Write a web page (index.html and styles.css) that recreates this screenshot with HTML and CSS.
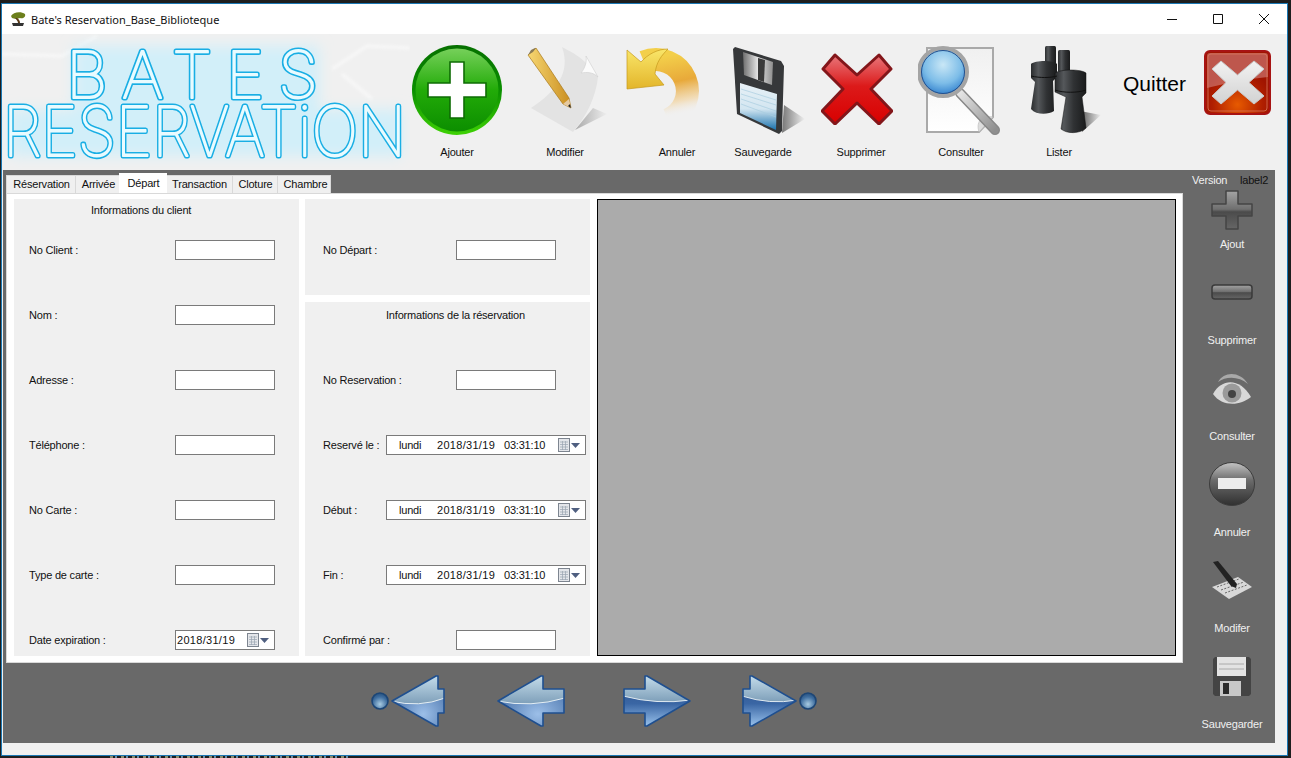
FILE: index.html
```html
<!DOCTYPE html>
<html lang="fr">
<head>
<meta charset="utf-8">
<title>Bate's Reservation_Base_Biblioteque</title>
<link rel="stylesheet" href="styles.css">
</head>
<body>
<svg class="defs" width="0" height="0" aria-hidden="true">
  <defs>
    <linearGradient id="upperBlue" x1="0" y1="0" x2="0" y2="1">
      <stop offset="0" stop-color="#c6deec"/><stop offset="1" stop-color="#7e9fb9"/>
    </linearGradient>
    <radialGradient id="lowerLight" cx=".6" cy=".75" r=".6">
      <stop offset="0" stop-color="#9cbfe8"/><stop offset="1" stop-color="#4d76ad"/>
    </radialGradient>
    <linearGradient id="lowerDark" x1="0" y1="0" x2="0" y2="1">
      <stop offset="0" stop-color="#2a5088"/><stop offset=".55" stop-color="#3a66a4"/><stop offset="1" stop-color="#9cc5ee"/>
    </linearGradient>
    <radialGradient id="dotFill" cx=".5" cy=".7" r=".65">
      <stop offset="0" stop-color="#a8cbe2"/><stop offset=".7" stop-color="#3f6e9f"/><stop offset="1" stop-color="#2a5686"/>
    </radialGradient>
    <linearGradient id="metal" x1="0" y1="0" x2="0" y2="1">
      <stop offset="0" stop-color="#a4a4a4"/><stop offset=".48" stop-color="#6f6f6f"/><stop offset=".55" stop-color="#4b4b4b"/><stop offset="1" stop-color="#666"/>
    </linearGradient>
    <linearGradient id="binoc" x1="0" y1="0" x2="1" y2="0">
      <stop offset="0" stop-color="#2a2c2e"/><stop offset=".28" stop-color="#55585b"/><stop offset=".6" stop-color="#303234"/><stop offset="1" stop-color="#1a1b1c"/>
    </linearGradient>
    <clipPath id="clipA1"><path d="M1 26 45 1h2v13h6v24h-6v13h-2z"/></clipPath>
    <clipPath id="clipA2"><path d="M1 26 44 1h2v13h21v24H46v13h-2z"/></clipPath>
    <clipPath id="clipA3"><path d="M67 26 24 1h-2v13H1v24h21v13h2z"/></clipPath>
    <clipPath id="clipA4"><path d="M54 26 10 1H8v13H1v24h7v13h2z"/></clipPath>
    <g id="dot">
      <circle cx="9" cy="9" r="8" fill="url(#dotFill)" stroke="#1d4676" stroke-width="1.600"/>
    </g>
  </defs>
</svg>

<div class="window">
  <header class="titlebar">
    <svg class="app-icon" viewBox="0 0 16 16" width="16" height="16">
      <path d="M1 5C3 1 11 0 15 3 16 6 13 8 10 7 8 8 4 8 2 7z" fill="#6c7f1c"/>
      <path d="M5 7c1 1 3 3 3 5h2c0-2-1-4-3-5z" fill="#5b3a17"/>
      <path d="M2 12h12l-1 3H3z" fill="#333"/>
    </svg>
    <span class="title-text">Bate's Reservation_Base_Biblioteque</span>
    <div class="caption">
      <svg class="cap-btn" viewBox="0 0 46 30" width="46" height="30"><path d="M18 15.500h10" stroke="#111" fill="none"/></svg>
      <svg class="cap-btn" viewBox="0 0 46 30" width="46" height="30"><path d="M18.500 10.500h9v9h-9z" stroke="#111" fill="none"/></svg>
      <svg class="cap-btn" viewBox="0 0 46 30" width="46" height="30"><path d="M18 10l10 10M28 10 18 20" stroke="#111" fill="none"/></svg>
    </div>
  </header>

  <section class="toolbar">
    <div class="logo">
      <svg viewBox="0 0 408 136" width="408" height="136">
        <defs>
          <filter id="glow" x="-10%" y="-20%" width="120%" height="140%"><feGaussianBlur stdDeviation="7"/></filter>
          <filter id="faint" x="-10%" y="-10%" width="120%" height="120%"><feGaussianBlur stdDeviation="1.500"/></filter>
          <text id="t1" x="64" y="64" font-size="65" textLength="252" lengthAdjust="spacing" class="neon-font">BATES</text>
          <text id="t2" x="1" y="122" font-size="69" textLength="403" lengthAdjust="spacingAndGlyphs" class="neon-font">RESERVATiON</text>
        </defs>
        <g filter="url(#faint)" fill="none" stroke="#f8f8f8" stroke-width="3">
          <path d="M0 20 60 22 95 2M330 35 365 12 408 14M340 40l30 25"/>
        </g>
        <g filter="url(#glow)" fill="#d2eff9">
          <rect x="72" y="12" width="245" height="66"/>
          <rect x="8" y="76" width="392" height="46"/>
        </g>
        <use href="#t1" class="tube-out"/><use href="#t2" class="tube-out"/>
        <use href="#t1" class="tube-in"/><use href="#t2" class="tube-in"/>
      </svg>
    </div>

    <div class="tool tool-add">
      <svg class="ic-add" viewBox="0 0 90 90" width="90" height="90">
        <defs>
          <linearGradient id="addRim" x1="0" y1="0" x2="0" y2="1"><stop offset="0" stop-color="#067000"/><stop offset=".5" stop-color="#0a8f00"/><stop offset="1" stop-color="#3fd205"/></linearGradient>
          <linearGradient id="addIn" x1="0" y1="0" x2="0" y2="1"><stop offset="0" stop-color="#76d05a"/><stop offset=".5" stop-color="#22ab08"/><stop offset="1" stop-color="#0c8e00"/></linearGradient>
        </defs>
        <circle cx="45" cy="45" r="45" fill="url(#addRim)"/>
        <circle cx="45" cy="45" r="41.500" fill="url(#addIn)"/>
        <path d="M38 17h14v21h22v14H52v21H38V52H16V38h22z" fill="#fff" stroke="#0e6c04" stroke-width="1.600"/>
      </svg>
      <span class="tool-label">Ajouter</span>
    </div>

    <div class="tool tool-mod">
      <svg class="ic-mod" viewBox="0 0 84 90" width="84" height="90">
        <defs>
          <linearGradient id="pencil" x1="0" y1="0" x2="1" y2="0"><stop offset="0" stop-color="#f7d772"/><stop offset="1" stop-color="#c98d1f"/></linearGradient>
          <linearGradient id="paperSh" x1="0" y1="0" x2="1" y2="0"><stop offset="0" stop-color="#a9a9a9"/><stop offset="1" stop-color="#eee"/></linearGradient>
        </defs>
        <path d="M48 84 80 68 66 62z" fill="url(#paperSh)"/>
        <path d="M35 1C44 26 30 45 4 62L46 86C60 70 69 50 71 31L61 19C55 12 45 6 35 1z" fill="#e3e3e3"/>
        <path d="M59 10 71 31C66 26 60 26 54 27 58 22 60 16 59 10z" fill="#fbfbfb" stroke="#cfcfcf" stroke-width=".6"/>
        <path d="M1 9 9 2 42 52 44 62 36 58z" fill="url(#pencil)" stroke="#a9791a" stroke-width=".7"/>
        <path d="M1 9 4 4 8 2 9 2 6 6z" fill="#8a7a55"/>
        <path d="M36 58 42 53 44 62z" fill="#e6caa1"/>
        <path d="M41 60 43 58 44 62z" fill="#222"/>
      </svg>
      <span class="tool-label">Modifier</span>
    </div>

    <div class="tool tool-undo">
      <svg class="ic-undo" viewBox="0 0 84 84" width="84" height="84">
        <defs>
          <linearGradient id="undoArc" x1=".1" y1="0" x2=".25" y2="1"><stop offset="0" stop-color="#f3cf4a"/><stop offset=".45" stop-color="#e8a93a"/><stop offset=".78" stop-color="#f2d9ae" stop-opacity=".8"/><stop offset="1" stop-color="#f0f0f0" stop-opacity="0"/></linearGradient>
          <linearGradient id="undoHead" x1="0" y1="0" x2="0" y2="1"><stop offset="0" stop-color="#f9e66a"/><stop offset="1" stop-color="#e3b52a"/></linearGradient>
        </defs>
        <path d="M18 16A30 30 0 1 1 42 74" fill="none" stroke="url(#undoArc)" stroke-width="23"/>
        <path d="M1 4 15 16C22 8 32 3 42 3 36 9 30 16 29 28L38 39 1 43z" fill="url(#undoHead)" stroke="#c69a1d" stroke-width=".7"/>
      </svg>
      <span class="tool-label">Annuler</span>
    </div>

    <div class="tool tool-save">
      <svg class="ic-save" viewBox="0 0 74 90" width="74" height="90">
        <defs>
          <linearGradient id="shutter" x1="0" y1="0" x2="1" y2="0"><stop offset="0" stop-color="#6f6f6f"/><stop offset=".5" stop-color="#e6e6e6"/><stop offset="1" stop-color="#8e8e8e"/></linearGradient>
          <linearGradient id="flopSh" x1="0" y1="0" x2="1" y2="0"><stop offset="0" stop-color="#777"/><stop offset="1" stop-color="#f0f0f0"/></linearGradient>
          <linearGradient id="flopBlue" x1="0" y1="0" x2="0" y2="1"><stop offset="0" stop-color="#e8f1f6"/><stop offset=".55" stop-color="#d3e6f1"/><stop offset="1" stop-color="#1a72ad"/></linearGradient>
        </defs>
        <path d="M50 86 73 72 52 58z" fill="url(#flopSh)"/>
        <path d="M1 2 3 0 49 14 52 19 50 84 47 87 5 67z" fill="#36383a"/>
        <path d="M11 5 41 15 40 38 12 28z" fill="url(#shutter)"/>
        <path d="M26 11 33 13 32 35 26 33z" fill="#3a3a3a"/>
        <path d="M8 36 45 47 44 83 8 66z" fill="url(#flopBlue)"/>
        <path d="M9 42 44 53M9 47 44 58M9 52 44 64M9 57 44 70" stroke="#a9cde0" stroke-width=".7" fill="none"/>
      </svg>
      <span class="tool-label">Sauvegarde</span>
    </div>

    <div class="tool tool-del">
      <svg class="ic-del" viewBox="0 0 72 72" width="72" height="72">
        <defs>
          <linearGradient id="xFill" x1="0" y1="0" x2="0" y2="1"><stop offset="0" stop-color="#e8777b"/><stop offset=".45" stop-color="#dc1a1a"/><stop offset="1" stop-color="#d80000"/></linearGradient>
        </defs>
        <path d="M14 2 36 22 58 2 70 16 50 36 71 58 58 71 36 50 14 71 1 58 22 36 2 16z" fill="url(#xFill)" stroke="#83161a" stroke-width="3" stroke-linejoin="round"/>
      </svg>
      <span class="tool-label">Supprimer</span>
    </div>

    <div class="tool tool-cons">
      <svg class="ic-cons" viewBox="0 0 84 90" width="84" height="90">
        <defs>
          <linearGradient id="docF" x1="0" y1="0" x2="0" y2="1"><stop offset="0" stop-color="#f0f0f0"/><stop offset="1" stop-color="#fff"/></linearGradient>
          <radialGradient id="lens" cx=".5" cy=".35" r=".7"><stop offset="0" stop-color="#c9e7f6"/><stop offset=".55" stop-color="#7dbde8"/><stop offset="1" stop-color="#1d70c6"/></radialGradient>
          <linearGradient id="handle" x1="0" y1="0" x2="1" y2="1"><stop offset="0" stop-color="#e4e4e4"/><stop offset="1" stop-color="#8f8f8f"/></linearGradient>
        </defs>
        <path d="M9 3H75V72L61 87H9z" fill="url(#docF)" stroke="#a9a9a9" stroke-width="2"/>
        <path d="M61 87C58 78 62 70 75 72z" fill="#ddd" stroke="#b5b5b5" stroke-width=".6"/>
        <path d="M42 48 77 85" stroke="#888" stroke-width="10" stroke-linecap="round"/>
        <path d="M42 48 77 85" stroke="url(#handle)" stroke-width="7" stroke-linecap="round"/>
        <circle cx="25" cy="27" r="24" fill="url(#lens)" stroke="#a4a4a4" stroke-width="4"/>
        <circle cx="25" cy="27" r="21.500" fill="none" stroke="#244f8b" stroke-width="1"/>
      </svg>
      <span class="tool-label">Consulter</span>
    </div>

    <div class="tool tool-list">
      <svg class="ic-list" viewBox="0 0 72 90" width="72" height="90">
        <defs>
          <linearGradient id="binSh" x1="0" y1="0" x2="1" y2="0"><stop offset="0" stop-color="#555"/><stop offset="1" stop-color="#eee"/></linearGradient>
        </defs>
        <path d="M52 87 71 70 50 66z" fill="url(#binSh)"/>
        <rect x="15" y="1" width="11" height="18" rx="1.500" fill="url(#binoc)"/>
        <rect x="28" y="5" width="12" height="22" rx="1.500" fill="url(#binoc)"/>
        <path d="M1 19C5 15 24 15 27 19V32L23 36 24 66C18 70 6 70 1 64L5 37 1 33z" fill="url(#binoc)"/>
        <path d="M25 28C30 24 52 24 56 28V48L52 52 56 83C50 89 37 89 31 84L36 52 25 47z" fill="url(#binoc)" stroke="#111" stroke-width=".5"/>
        <path d="M25 45C33 48 48 48 56 45M1 31C10 33 20 33 27 31" stroke="#111" fill="none"/>
      </svg>
      <span class="tool-label">Lister</span>
    </div>

    <div class="quit">
      <span class="quit-label">Quitter</span>
      <svg class="ic-quit" viewBox="0 0 67 65" width="67" height="65">
        <defs>
          <radialGradient id="quitF" cx=".5" cy=".85" r=".55"><stop offset="0" stop-color="#e75a00"/><stop offset=".7" stop-color="#b01f00"/><stop offset="1" stop-color="#a01400"/></radialGradient>
          <linearGradient id="xGrey" x1="0" y1="0" x2="0" y2="1"><stop offset="0" stop-color="#f2f2f2"/><stop offset="1" stop-color="#d2d2d2"/></linearGradient>
        </defs>
        <rect x="1" y="1" width="65" height="63" rx="5" fill="url(#quitF)" stroke="#a71313" stroke-width="2"/>
        <path d="M3 6Q3 3 6 3H61Q64 3 64 6V27Q34 30 3 38z" fill="#dc9a9a" fill-opacity=".5"/>
        <rect x="4" y="4" width="59" height="57" rx="3" fill="none" stroke="#d8765a" stroke-width=".8"/>
        <path d="M17 11 33.500 25 50 11 60 19 45 32.500 60 46 50 54 33.500 40 17 54 8 46 22 32.500 8 19z" fill="url(#xGrey)" stroke="#c8c8c8" stroke-width="1" stroke-linejoin="round"/>
      </svg>
    </div>
  </section>

  <section class="workspace">
    <div class="content">
      <nav class="tabs">
        <span class="tab tab-w1">Réservation</span>
        <span class="tab tab-w2">Arrivée</span>
        <span class="tab tab-active">Départ</span>
        <span class="tab tab-w4">Transaction</span>
        <span class="tab tab-w5">Cloture</span>
        <span class="tab tab-w6">Chambre</span>
      </nav>
      <div class="page">
        <div class="panel panel-client">
          <h2 class="panel-title title-client">Informations du client</h2>
          <div class="fields">
            <label class="field"><span class="lbl lbl-client">No Client :</span><input class="box" type="text"></label>
            <label class="field"><span class="lbl lbl-client">Nom :</span><input class="box" type="text"></label>
            <label class="field"><span class="lbl lbl-client">Adresse :</span><input class="box" type="text"></label>
            <label class="field"><span class="lbl lbl-client">Téléphone :</span><input class="box" type="text"></label>
            <label class="field"><span class="lbl lbl-client">No Carte :</span><input class="box" type="text"></label>
            <label class="field"><span class="lbl lbl-client">Type de carte :</span><input class="box" type="text"></label>
            <div class="field"><span class="lbl lbl-client">Date expiration :</span>
              <div class="box date-short"><span class="stamp-short">2018/31/19</span>
                <svg class="cal" viewBox="0 0 23 14" width="23" height="14"><rect x=".5" y=".5" width="11" height="13" fill="#e4e6ea" stroke="#7d8590"/><path d="M2 4h8M2 6.500h8M2 9h8M2 11.500h8M4.500 3v9M7.500 3v9" stroke="#9aa3b0" stroke-width=".7"/><path d="M13 5h9l-4.500 5z" fill="#4f5f80"/></svg>
              </div>
            </div>
          </div>
        </div>
        <div class="mid">
          <div class="panel panel-depart">
            <div class="field"><span class="lbl lbl-mid">No Départ :</span><input class="box" type="text"></div>
          </div>
          <div class="panel panel-resa">
            <h2 class="panel-title title-resa">Informations de la réservation</h2>
            <div class="fields">
              <div class="field"><span class="lbl lbl-mid">No Reservation :</span><input class="box" type="text"></div>
              <div class="field"><span class="lbl lbl-date">Reservé le :</span>
                <div class="box date-long"><span class="day">lundi</span><span class="stamp">2018/31/19</span><span class="clock">03:31:10</span>
                  <svg class="cal" viewBox="0 0 23 14" width="23" height="14"><rect x=".5" y=".5" width="11" height="13" fill="#e4e6ea" stroke="#7d8590"/><path d="M2 4h8M2 6.500h8M2 9h8M2 11.500h8M4.500 3v9M7.500 3v9" stroke="#9aa3b0" stroke-width=".7"/><path d="M13 5h9l-4.500 5z" fill="#4f5f80"/></svg>
                </div>
              </div>
              <div class="field"><span class="lbl lbl-date">Début :</span>
                <div class="box date-long"><span class="day">lundi</span><span class="stamp">2018/31/19</span><span class="clock">03:31:10</span>
                  <svg class="cal" viewBox="0 0 23 14" width="23" height="14"><rect x=".5" y=".5" width="11" height="13" fill="#e4e6ea" stroke="#7d8590"/><path d="M2 4h8M2 6.500h8M2 9h8M2 11.500h8M4.500 3v9M7.500 3v9" stroke="#9aa3b0" stroke-width=".7"/><path d="M13 5h9l-4.500 5z" fill="#4f5f80"/></svg>
                </div>
              </div>
              <div class="field"><span class="lbl lbl-date">Fin :</span>
                <div class="box date-long"><span class="day">lundi</span><span class="stamp">2018/31/19</span><span class="clock">03:31:10</span>
                  <svg class="cal" viewBox="0 0 23 14" width="23" height="14"><rect x=".5" y=".5" width="11" height="13" fill="#e4e6ea" stroke="#7d8590"/><path d="M2 4h8M2 6.500h8M2 9h8M2 11.500h8M4.500 3v9M7.500 3v9" stroke="#9aa3b0" stroke-width=".7"/><path d="M13 5h9l-4.500 5z" fill="#4f5f80"/></svg>
                </div>
              </div>
              <div class="field"><span class="lbl lbl-mid">Confirmé par :</span><input class="box" type="text"></div>
            </div>
          </div>
        </div>
        <div class="viewer"></div>
      </div>
      <div class="nav-arrows">
        <svg class="nav-first" viewBox="0 0 75 52" width="75" height="52">
          <use href="#dot" x="1" y="17"/>
          <g transform="translate(21 0)">
            <g clip-path="url(#clipA1)">
              <rect width="54" height="52" fill="url(#lowerLight)"/>
              <path d="M0 26Q28 33 54 23V0H0z" fill="url(#upperBlue)"/>
              <path d="M0 26Q28 33 54 23" fill="none" stroke="#e4eef4"/>
            </g>
            <path d="M1 26 45 1h2v13h6v24h-6v13h-2z" fill="none" stroke="#1f4f8f" stroke-width="1.600" stroke-linejoin="round"/>
          </g>
        </svg>
        <svg class="nav-prev" viewBox="0 0 68 52" width="68" height="52">
          <g clip-path="url(#clipA2)">
            <rect width="68" height="52" fill="url(#lowerLight)"/>
            <path d="M0 26Q34 33 68 23V0H0z" fill="url(#upperBlue)"/>
            <path d="M0 26Q34 33 68 23" fill="none" stroke="#e4eef4"/>
          </g>
          <path d="M1 26 44 1h2v13h21v24H46v13h-2z" fill="none" stroke="#1f4f8f" stroke-width="1.600" stroke-linejoin="round"/>
        </svg>
        <svg class="nav-next" viewBox="0 0 68 52" width="68" height="52">
          <g clip-path="url(#clipA3)">
            <rect width="68" height="52" fill="url(#lowerDark)"/>
            <path d="M0 21Q34 30 68 25V0H0z" fill="url(#upperBlue)"/>
            <path d="M0 21Q34 30 68 25" fill="none" stroke="#dfe9f0"/>
          </g>
          <path d="M67 26 24 1h-2v13H1v24h21v13h2z" fill="none" stroke="#1f4f8f" stroke-width="1.600" stroke-linejoin="round"/>
        </svg>
        <svg class="nav-last" viewBox="0 0 76 52" width="76" height="52">
          <g clip-path="url(#clipA4)">
            <rect width="55" height="52" fill="url(#lowerDark)"/>
            <path d="M0 21Q28 30 55 25V0H0z" fill="url(#upperBlue)"/>
            <path d="M0 21Q28 30 55 25" fill="none" stroke="#dfe9f0"/>
          </g>
          <path d="M54 26 10 1H8v13H1v24h7v13h2z" fill="none" stroke="#1f4f8f" stroke-width="1.600" stroke-linejoin="round"/>
          <use href="#dot" x="57" y="17"/>
        </svg>
      </div>
    </div>

    <aside class="side">
      <div class="side-head"><span class="ver">Version</span><span class="lab2">label2</span></div>
      <div class="side-item item-plus">
        <svg viewBox="0 0 42 40" width="42" height="40" class="s-plus"><path d="M15 1h12v13h14v12H27v13H15V26H1V14h14z" fill="url(#metal)" stroke="#444" stroke-width="1.500" stroke-linejoin="round"/></svg>
        <span class="side-label">Ajout</span>
      </div>
      <div class="side-item">
        <svg viewBox="0 0 42 16" width="42" height="16" class="s-minus"><rect x="1" y="1" width="40" height="14" rx="3" fill="url(#metal)" stroke="#3a3a3a" stroke-width="1.500"/></svg>
        <span class="side-label">Supprimer</span>
      </div>
      <div class="side-item">
        <svg viewBox="0 0 40 38" width="40" height="38" class="s-eye">
          <path d="M6 12C12 1 28 1 36 14 27 6 14 6 6 12z" fill="#a9a9a9"/>
          <path d="M1 24C10 8 28 8 39 27 28 36 10 37 1 24z" fill="#d8d8d8"/>
          <circle cx="20" cy="23" r="9.500" fill="#9a9a9a"/><circle cx="20" cy="24" r="4" fill="#444"/>
        </svg>
        <span class="side-label">Consulter</span>
      </div>
      <div class="side-item">
        <svg viewBox="0 0 46 44" width="46" height="44" class="s-circle">
          <defs><linearGradient id="cFill" x1="0" y1="0" x2="0" y2="1"><stop offset="0" stop-color="#c4c4c4"/><stop offset=".42" stop-color="#6a6a6a"/><stop offset="1" stop-color="#303030"/></linearGradient></defs>
          <ellipse cx="23" cy="22" rx="22.500" ry="21.500" fill="url(#cFill)" stroke="#3c3c3c"/>
          <rect x="9" y="16" width="28" height="11" fill="#ededed"/>
        </svg>
        <span class="side-label">Annuler</span>
      </div>
      <div class="side-item">
        <svg viewBox="0 0 42 40" width="42" height="40" class="s-pen">
          <path d="M1 27 27 17 41 27 18 39z" fill="#d8d8d8"/>
          <path d="M6 27 28 19M10 30 33 22M14 33 36 25" stroke="#666" stroke-dasharray="2 1.500" fill="none"/>
          <path d="M2 2 7 1 26 24 25 28 20 26z" fill="#222"/>
        </svg>
        <span class="side-label">Modifer</span>
      </div>
      <div class="side-item item-save">
        <svg viewBox="0 0 40 40" width="40" height="40" class="s-floppy">
          <path d="M1 3 3 1H37L39 3V38L37 40H3L1 38z" fill="#444"/>
          <rect x="5" y="1" width="29" height="19" fill="#e3e3e3"/>
          <path d="M7 8H32M7 13H32" stroke="#aaa" fill="none"/>
          <rect x="8" y="25" width="21" height="15" fill="#c8c8c8"/>
          <rect x="11" y="27" width="6" height="11" fill="#2b2b2b"/>
        </svg>
        <span class="side-label">Sauvegarder</span>
      </div>
    </aside>
  </section>
</div>
<div class="behind"></div>
</body>
</html>
```

FILE: styles.css
```css
* { box-sizing: border-box; }

html, body {
  margin: 0;
  padding: 0;
  height: 758px;
  overflow: hidden;
  background: #1e1e1e;
}

body {
  padding: 3px 3px 0 1px;
  font-family: "Liberation Sans", Arial, sans-serif;
  font-size: 11px;
  letter-spacing: -0.2px;
  color: #111;
}

.defs { display: block; height: 0; width: 0; }

.window {
  width: 1287px;
  height: 753px;
  border: 1px solid #1a78b4;
  background: #f0f0f0;
  display: flex;
  flex-direction: column;
}

.behind {
  height: 2px;
  margin-left: 109px;
  width: 240px;
  background: repeating-linear-gradient(90deg, #8a8f70 0 3px, #1e1e1e 3px 5px, #6a8fa8 5px 7px, #1e1e1e 7px 11px);
}

/* title bar */
.titlebar {
  height: 30px;
  background: #fff;
  display: flex;
  align-items: center;
  padding-left: 8px;
  flex: none;
}
.app-icon { margin-right: 5px; }
.title-text { font: 11px "Noto Sans", sans-serif; letter-spacing: 0; color: #111; }
.caption { margin-left: auto; display: flex; }
.cap-btn { display: block; }

/* top toolbar */
.toolbar {
  height: 136px;
  flex: none;
  display: flex;
  background: #f0f0f0;
}
.logo { width: 410px; flex: none; height: 136px; }
.logo svg { display: block; }
.neon-font { font-family: Inter, Roboto, sans-serif; font-weight: 100; letter-spacing: 0; }
.tube-out { fill: #19aee4; stroke: #19aee4; stroke-width: 5; stroke-linejoin: round; }
.tube-in { fill: #e9fbff; stroke: #e9fbff; stroke-width: 1.800; stroke-linejoin: round; }

.tool {
  flex: none;
  height: 136px;
  display: flex;
  flex-direction: column;
  align-items: center;
  position: relative;
}
.tool svg { display: block; flex: none; }
.tool-label {
  margin-top: auto;
  margin-bottom: 11px;
  line-height: 14px;
  white-space: nowrap;
  color: #111;
}
.tool-add { width: 90px; }
.tool-mod { width: 126px; }
.tool-undo { width: 98px; }
.tool-save { width: 74px; }
.tool-del { width: 122px; }
.tool-cons { width: 78px; }
.tool-list { width: 118px; }

.ic-add { margin-top: 11px; }
.ic-mod { margin: 12px 0 0 8px; }
.ic-undo { margin: 12px 0 0 -18px; }
.ic-save { margin: 13px 0 0 11px; }
.ic-del { margin: 19px 0 0 -9px; }
.ic-cons { margin: 11px 0 0 -3px; }
.ic-list { margin: 11px 0 0 14px; }

.quit { display: flex; align-items: flex-start; flex: none; }
.quit-label { font-size: 21px; letter-spacing: 0; line-height: 24px; margin: 38px 18px 0 5px; color: #000; }
.ic-quit { display: block; margin-top: 16px; }

/* dark work area */
.workspace {
  width: 1272px;
  height: 573px;
  margin-left: 1px;
  background: #696969;
  display: flex;
  flex: none;
}
.content {
  width: 1180px;
  flex: none;
  padding: 3px 0 0 3px;
}
.tabs {
  height: 20px;
  display: flex;
  align-items: flex-end;
  padding-left: 1px;
}
.tab {
  height: 18px;
  line-height: 17px;
  background: #f0f0f0;
  border: 1px solid #d9d9d9;
  border-bottom: 0;
  margin-left: -1px;
  padding-left: 1px;
  text-align: center;
  color: #111;
}
.tab-w1 { width: 70px; }
.tab-w2 { width: 45px; padding-left: 2px; }
.tab-w4 { width: 67px; padding-left: 0; }
.tab-w5 { width: 46px; }
.tab-w6 { width: 54px; padding-left: 3px; }
.tab-active {
  width: 48px;
  height: 20px;
  line-height: 18px;
  background: #fff;
  border-color: #fff;
  z-index: 1;
}

.page {
  width: 1177px;
  height: 470px;
  background: #fff;
  border: 1px solid #d9d9d9;
  display: flex;
  gap: 6px;
  padding: 5px 6px 6px 7px;
}
.panel { background: #f0f0f0; }
.panel-client {
  width: 285px;
  display: flex;
  flex-direction: column;
  padding-left: 15px;
}
.panel-title {
  margin: 0;
  font-size: 11px;
  font-weight: normal;
  color: #111;
}
.title-client { padding: 5px 0 0 62px; height: 41px; line-height: 13px; }
.title-resa { height: 68px; margin-left: -18px; padding: 6px 0 0 81px; line-height: 14px; }
.fields { display: flex; flex-direction: column; gap: 45px; }
.field { display: flex; align-items: center; height: 20px; }
.lbl { white-space: nowrap; color: #111; flex: none; }
.lbl-client { width: 146px; }
.lbl-mid { width: 133px; }
.lbl-date { width: 63px; }
.box {
  width: 100px;
  height: 20px;
  border: 1px solid #7a7a7a;
  background: #fff;
  margin: 0;
  padding: 0;
  font: 11px "Liberation Sans", sans-serif;
  border-radius: 0;
  outline: 0;
}
.date-short {
  display: flex;
  align-items: center;
  padding-left: 1px;
  color: #111;
}
.stamp-short { width: 70px; letter-spacing: .3px; }
.date-long {
  width: 200px;
  display: flex;
  align-items: center;
  color: #111;
}
.day { margin-left: 12px; width: 38px; }
.stamp { width: 67px; letter-spacing: .3px; }
.clock { width: 54px; }
.cal { display: block; flex: none; }

.mid {
  width: 285px;
  display: flex;
  flex-direction: column;
  gap: 7px;
}
.panel-depart {
  height: 96px;
  padding: 41px 0 0 18px;
}
.panel-resa {
  height: 354px;
  padding-left: 18px;
}
.viewer {
  width: 579px;
  margin-left: 1px;
  background: #ababab;
  border: 1px solid #000;
}

.nav-arrows {
  display: flex;
  padding: 12px 0 0 364px;
}
.nav-arrows svg { display: block; overflow: visible; flex: none; }
.nav-prev { margin-left: 52px; }
.nav-next { margin-left: 58px; }
.nav-last { margin-left: 51px; }

/* right tool column */
.side {
  flex: 1;
  display: flex;
  flex-direction: column;
  align-items: center;
}
.side-head {
  height: 20px;
  width: 100%;
  display: flex;
  align-items: center;
  padding: 0 0 0 9px;
}
.ver { color: #f0f0f0; width: 48px; }
.lab2 { color: #111; }
.side-item {
  height: 96px;
  width: 100%;
  flex: none;
  display: flex;
  flex-direction: column;
  align-items: center;
  padding-left: 6px;
}
.item-plus { height: 73px; }
.side-item svg { display: block; flex: none; }
.side-label {
  margin-top: auto;
  margin-bottom: 12px;
  line-height: 14px;
  color: #f0f0f0;
  white-space: nowrap;
}
.s-minus { margin-top: 21px; }
.s-eye { margin-top: 11px; }
.s-circle { margin-top: 7px; }
.s-pen { margin-top: 9px; }
.s-floppy { margin-top: 9px; }
```
